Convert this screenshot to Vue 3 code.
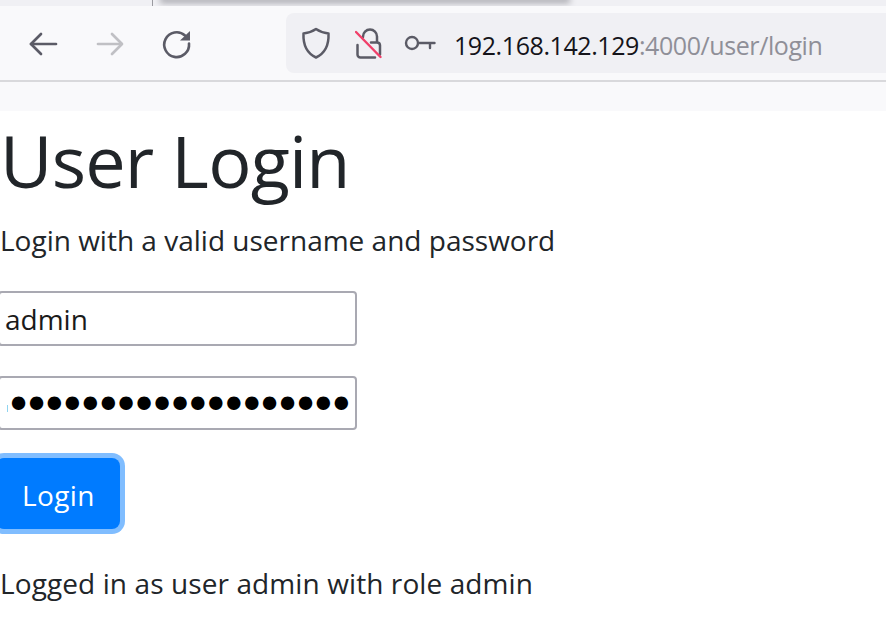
<script setup>
const dots = '•'.repeat(19)
</script>

<template>
  <div class="page">
    <div class="tabstrip">
      <div class="tab-left"></div>
      <div class="tab-sep"></div>
      <div class="tab-active"></div>
    </div>
    <div class="toolbar">
      <div class="nav">
        <svg class="navicon" width="32" height="32" viewBox="0 0 32 32" fill="none" stroke="#5b5b66" stroke-width="2.7" stroke-linecap="round" stroke-linejoin="round"><path d="M4 16H29"/><path d="M14 6 4 16 14 26"/></svg>
        <svg class="navicon" width="32" height="32" viewBox="0 0 32 32" fill="none" stroke="#c0c0c4" stroke-width="2.7" stroke-linecap="round" stroke-linejoin="round"><path d="M5 16H28.5"/><path d="M19 6 29 16 19 26"/></svg>
        <svg class="navicon" width="32" height="32" viewBox="0 0 32 32" fill="none" stroke="#5b5b66" stroke-width="2.6" stroke-linecap="round"><path d="M26 7.5A12.4 12.4 0 1 0 30 15.5"/><path d="M21 12.6 31 12.6 31 3z" fill="#5b5b66" stroke="none"/></svg>
      </div>
      <div class="urlbar">
        <svg class="u-shield" width="30" height="32" viewBox="0 0 30 32" fill="none" stroke="#5b5b66" stroke-width="2.5" stroke-linejoin="round"><path d="M15 2C11 4.8 6.8 6 2.5 6.6 2 18 5.5 26 15 30.5 24.5 26 28 18 27.5 6.6 23.2 6 19 4.8 15 2z"/></svg>
        <svg class="u-lock" width="28" height="32" viewBox="0 0 28 32" fill="none"><path d="M8 10V9.5A7 7 0 0 1 22 9.5V15.5M16 15.5H22C23.8 15.5 25 16.7 25 18.5V27.5M20 30.5H5.5C3.7 30.5 2.5 29.3 2.5 27.5V18" stroke="#5b5b66" stroke-width="2.5" stroke-linecap="round"/><path d="M1 5 25.5 30" stroke="#f0406a" stroke-width="2.4" stroke-linecap="round"/></svg>
        <svg class="u-key" width="32" height="18" viewBox="0 0 32 18" fill="none" stroke="#5b5b66" stroke-width="2.4" stroke-linecap="round"><circle cx="8" cy="9" r="6"/><path d="M14.5 9H30.5M26 9V14"/></svg>
        <span class="url">192.168.142.129<span class="url-dim">:4000/user/login</span></span>
      </div>
    </div>
    <div class="bookmarks"></div>
    <main class="content">
      <h1 class="title">User Login</h1>
      <p class="lead">Login with a valid username and password</p>
      <div class="field">admin</div>
      <div class="field field-pass"><span class="caret"></span>{{ dots }}</div>
      <div class="btn">Login</div>
      <p class="status">Logged in as user admin with role admin</p>
    </main>
  </div>
</template>

<style scoped>
.page {
  width: 886px;
  height: 633px;
  overflow: hidden;
  background: #fff;
  font-family: "Open Sans", "Noto Sans", sans-serif;
  color: #212529;
}
.tabstrip {
  height: 6px;
  display: flex;
  background: #f0f0f4;
  overflow: hidden;
}
.tab-left { width: 152px; }
.tab-sep { width: 1px; background: #9a9aa0; }
.tab-active {
  width: 404px;
  height: 0;
  margin-left: 10px;
  box-shadow: 0 0 6px 3px rgba(60, 60, 70, .42);
}
.toolbar {
  height: 76px;
  box-sizing: border-box;
  background: #f9f9fb;
  border-bottom: 2px solid #d9d9dc;
  display: flex;
  align-items: flex-start;
}
.nav {
  width: 286px;
  display: flex;
  padding: 22px 0 0 27px;
  box-sizing: border-box;
  gap: 34px;
}
.navicon { display: block; width: 32px; height: 32px; }
.urlbar {
  flex: 1;
  margin-top: 7px;
  height: 60px;
  background: #f0f0f4;
  border-radius: 8px 0 0 8px;
  display: flex;
  align-items: center;
  color: #15141a;
}
.u-shield { margin-left: 15px; }
.u-lock { margin-left: 24px; }
.u-key { margin-left: 21px; }
.url {
  margin-left: 18px;
  padding-top: 5px;
  font-size: 25px;
  letter-spacing: -.42px;
  line-height: 55px;
  white-space: nowrap;
  color: #15141a;
}
.url-dim { color: #8f8f98; }
.bookmarks {
  height: 29px;
  background: #f9f9fb;
}
.title {
  margin: 0;
  font-size: 72px;
  font-weight: 400;
  line-height: 98px;
  letter-spacing: -.8px;
  white-space: nowrap;
}
.lead, .status {
  margin: 0;
  font-size: 28px;
  line-height: 36px;
  white-space: nowrap;
}
.lead { margin-top: 13px; }
.field {
  width: 359px;
  height: 55px;
  box-sizing: border-box;
  margin: 33px 0 0 -2px;
  padding-left: 5px;
  border: 2px solid #a9a9b2;
  border-radius: 4px;
  background: #fff;
  font-size: 28px;
  line-height: 53px;
  color: #1a1a1a;
}
.field-pass {
  height: 54px;
  margin-top: 30px;
  color: #000;
  padding-left: 7px;
  font-family: "DejaVu Sans", sans-serif;
  font-size: 46px;
  line-height: 55px;
  letter-spacing: -9.2px;
  white-space: nowrap;
}
.caret {
  display: inline-block;
  width: 1px;
  height: 7px;
  margin-right: -3px;
  background: #8fd4f0;
  vertical-align: middle;
}
.btn {
  width: 124px;
  height: 71px;
  box-sizing: border-box;
  margin: 28px 0 0 -4px;
  padding-left: 26px;
  background: #007bff;
  border-radius: 8px;
  box-shadow: 0 0 0 5px #80bdff;
  color: #fff;
  font-size: 28px;
  line-height: 74px;
  letter-spacing: .4px;
}
.status { margin-top: 36px; letter-spacing: .1px; }
</style>
